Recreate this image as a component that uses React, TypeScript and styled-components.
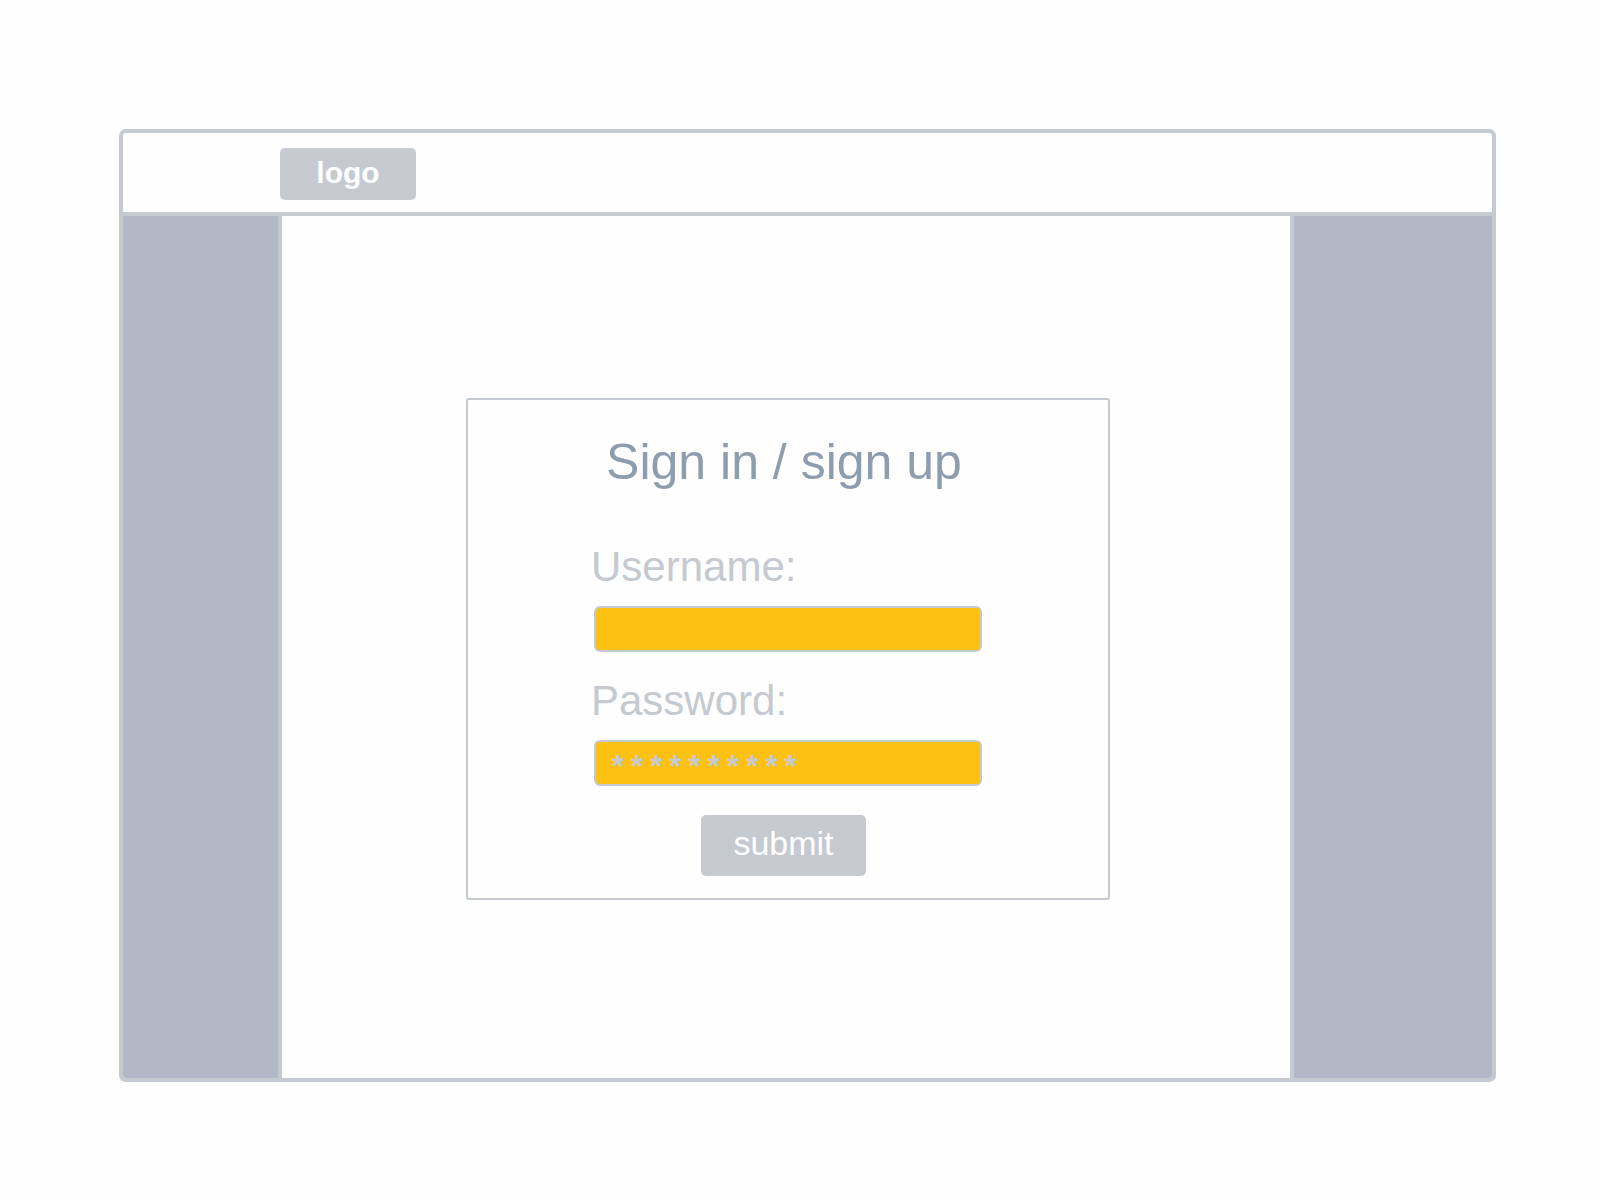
import React, { useState } from "react";
import styled, { createGlobalStyle } from "styled-components";

const line = "#c5c9d0";
const paper = "#fefefe";

const GlobalStyle = createGlobalStyle`
  *, *::before, *::after { box-sizing: border-box; }
  body {
    margin: 0;
    background: ${paper};
    font-family: "Liberation Sans", Arial, sans-serif;
  }
`;

const Page = styled.div`
  display: flex;
  min-height: 100vh;
  padding: 129px 104px 118px 119px;
`;

const Frame = styled.div`
  flex: 1;
  display: flex;
  flex-direction: column;
  border: 4px solid ${line};
  border-radius: 7px;
`;

const Header = styled.header`
  display: flex;
  padding: 15px 157px 12px;
  border-bottom: 4px solid ${line};
`;

const Logo = styled.a`
  display: flex;
  align-items: center;
  justify-content: center;
  width: 136px;
  height: 52px;
  padding-bottom: 2px;
  border-radius: 5px;
  background: ${line};
  color: #fff;
  font-size: 30px;
  font-weight: 700;
  line-height: 40px;
  text-decoration: none;
`;

const Body = styled.div`
  flex: 1;
  display: grid;
  grid-template-columns: 159px minmax(0, 1fr) 202px;
`;

const Rail = styled.aside<{ $side: "left" | "right" }>`
  background: #b2b8c5;
  ${({ $side }) =>
    $side === "left"
      ? `border-right: 4px solid ${line}; border-bottom-left-radius: 3px;`
      : `border-left: 4px solid ${line}; border-bottom-right-radius: 3px;`}
`;

const Main = styled.main`
  display: flex;
  align-items: center;
  justify-content: center;
  padding: 4px 0 0 4px;
`;

const Card = styled.form`
  display: flex;
  flex-direction: column;
  align-items: center;
  width: 644px;
  max-width: 100%;
  padding: 32px 0 22px;
  border: 2px solid ${line};
  border-radius: 3px;
`;

const Title = styled.h1`
  margin: 0 0 51px;
  padding-right: 8px;
  color: #8e9dad;
  font-size: 50px;
  font-weight: 400;
  line-height: 60px;
`;

const Fields = styled.div`
  display: grid;
  grid-template-columns: minmax(0, 1fr);
  gap: 25px;
  width: 394px;
  max-width: 100%;
`;

const Field = styled.div`
  display: flex;
  flex-direction: column;
  gap: 15px;
`;

const Label = styled.label`
  color: ${line};
  font-size: 42px;
  line-height: 48px;
`;

const Input = styled.input`
  min-width: 0;
  height: 46px;
  margin: 0 3px;
  padding: 12px 12px 0;
  border: 2px solid ${line};
  border-radius: 6px;
  outline: none;
  background: #fdc113;
  color: ${line};
  font-family: "Liberation Mono", "Courier New", monospace;
  font-size: 32px;
  font-weight: 700;
`;

const Actions = styled.div`
  margin-top: 29px;
  padding-right: 9px;
`;

const Submit = styled.button`
  display: block;
  width: 165px;
  height: 61px;
  padding: 0 0 6px;
  border: 0;
  border-radius: 5px;
  background: ${line};
  color: #fff;
  font-family: inherit;
  font-size: 34px;
  line-height: 40px;
  cursor: pointer;
`;

export default function App() {
  const [username, setUsername] = useState("");
  const [password, setPassword] = useState("**********");

  return (
    <>
      <GlobalStyle />
      <Page>
        <Frame>
          <Header>
            <Logo href="#">logo</Logo>
          </Header>
          <Body>
            <Rail $side="left" />
            <Main>
              <Card onSubmit={(e) => e.preventDefault()}>
                <Title>Sign in / sign up</Title>
                <Fields>
                  <Field>
                    <Label htmlFor="username">Username:</Label>
                    <Input
                      id="username"
                      type="text"
                      value={username}
                      onChange={(e) => setUsername(e.target.value)}
                    />
                  </Field>
                  <Field>
                    <Label htmlFor="password">Password:</Label>
                    <Input
                      id="password"
                      type="text"
                      autoComplete="off"
                      value={password}
                      onChange={(e) => setPassword(e.target.value)}
                    />
                  </Field>
                </Fields>
                <Actions>
                  <Submit type="submit">submit</Submit>
                </Actions>
              </Card>
            </Main>
            <Rail $side="right" />
          </Body>
        </Frame>
      </Page>
    </>
  );
}
